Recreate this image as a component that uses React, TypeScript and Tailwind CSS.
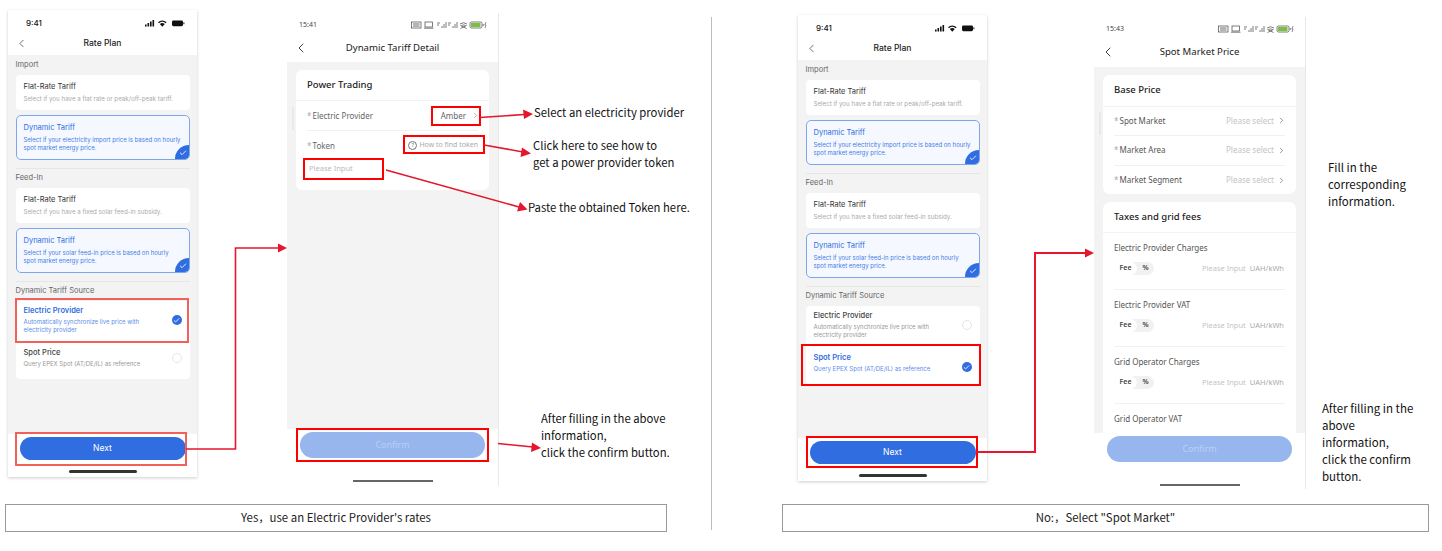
import React from 'react';
import { ChevronLeft, ChevronRight, Check } from 'lucide-react';

const CJK = "font-['Noto_Sans_CJK_SC','Noto_Sans',sans-serif]";

const IosStatus = () => (
  <svg width="40" height="9" viewBox="0 0 40 9" className="text-[#111]" fill="currentColor">
    <rect x="0" y="5.5" width="1.6" height="2" />
    <rect x="2.5" y="4" width="1.6" height="3.5" />
    <rect x="5" y="2.5" width="1.6" height="5" />
    <rect x="7.5" y="1" width="1.6" height="6.5" />
    <path d="M13 3.2a6.4 6.4 0 0 1 8.6 0l-1 1.1a5 5 0 0 0-6.6 0zM14.8 5.1a3.8 3.8 0 0 1 5 0l-2.5 2.7z" />
    <rect x="27" y="1.4" width="11" height="5.8" rx="1.4" />
    <rect x="38.4" y="3.3" width="1" height="2" rx="0.4" />
  </svg>
);

const AndroidStatus = () => (
  <svg width="76" height="10" viewBox="0 0 76 10" fill="none" stroke="#444" strokeWidth="0.7">
    <rect x="0.5" y="2" width="9.5" height="6" />
    <path d="M2 4h6.5M2 6h6.5" strokeWidth="0.8" />
    <rect x="14" y="2" width="7.5" height="5" />
    <path d="M13 8.2h9.5" />
    <path d="M26 3h3M26 5h2M31 8V6M33 8V4M35 8V2" />
    <path d="M37 3h3M37 5h2M42 8V6M44 8V4M46 8V2" />
    <path d="M49 4a6 6 0 0 1 7 0M50.500 5.500a4 4 0 0 1 4 0M49.500 8.500l6-3M55.500 8.500l-6-3" />
    <rect x="59" y="2" width="12" height="6" rx="1.500" />
    <rect x="60" y="3" width="9.500" height="4" fill="#7ac143" stroke="none" />
    <path d="M72.200 4v2" />
    <path d="M75 2l-1.200 3h1.200l-1 3" strokeWidth="0.6" />
  </svg>
);

const Corner = () => (
  <div className="absolute right-0 bottom-0 w-[14px] h-[14px] bg-[#2f6de0] rounded-tl-[14px] rounded-br-[4px] flex items-end justify-end pr-[2px] pb-[2px]">
    <Check size={8} color="#fff" strokeWidth={2.6} />
  </div>
);

const TariffCard = ({ title, lines, active }: { title: string; lines: string[]; active?: boolean }) => (
  <div
    className={
      active
        ? 'relative h-[44.5px] rounded-[5px] border border-[#7ea6ee] bg-[#f5f9ff] px-[7px] pt-[7px] overflow-hidden'
        : 'relative h-[35.5px] rounded-[4px] bg-white px-[8px] pt-[7.5px]'
    }
  >
    <div className={active ? 'text-[7.5px] leading-[10px] text-[#2f6de0]' : 'text-[7.5px] leading-[10px] text-[#333]'}>{title}</div>
    <div className={active ? 'mt-[3px] text-[6px] leading-[8.2px] text-[#3f7be6]' : 'mt-[3px] text-[6.2px] leading-[8.2px] text-[#aaa]'}>
      {lines.map(l => (
        <div key={l} className="whitespace-nowrap">{l}</div>
      ))}
    </div>
    {active && <Corner />}
  </div>
);

const Radio = ({ on }: { on: boolean }) =>
  on ? (
    <div className="w-[10px] h-[10px] rounded-full bg-[#2f6de0] flex items-center justify-center shrink-0">
      <Check size={7} color="#fff" strokeWidth={3} />
    </div>
  ) : (
    <div className="w-[10px] h-[10px] rounded-full border border-[#e5e5e5] bg-white shrink-0" />
  );

const SourceRow = ({ title, lines, on, tall }: { title: string; lines: string[]; on: boolean; tall: boolean }) => (
  <div className={tall ? 'h-[42px] px-[8px] pt-[5.5px] flex items-start justify-between' : 'h-[36.5px] px-[8px] pt-[5.5px] flex items-start justify-between'}>
    <div>
      <div className={on ? 'text-[7.5px] leading-[10px] font-semibold text-[#2f6de0]' : 'text-[7.5px] leading-[10px] font-medium text-[#444]'}>{title}</div>
      <div className={on ? 'mt-[2px] text-[6px] leading-[8.2px] text-[#5b8ee8]' : 'mt-[2px] text-[6px] leading-[8.2px] text-[#999]'}>
        {lines.map(l => (
          <div key={l} className="whitespace-nowrap">{l}</div>
        ))}
      </div>
    </div>
    <div className={tall || on ? 'pt-[9px]' : 'pt-[5px]'}>
      <Radio on={on} />
    </div>
  </div>
);

const SectionLabel = ({ children, className }: { children: React.ReactNode; className: string }) => (
  <div className={`flex items-center text-[7.5px] text-[#666] ${className}`}>{children}</div>
);

const RatePlanPhone = ({ spot, className }: { spot?: boolean; className: string }) => (
  <div className={`bg-white w-[189px] flex flex-col shadow-[0_1px_3px_rgba(0,0,0,0.2)] shrink-0 font-['Inter',sans-serif] ${className}`}>
    <div className="h-[26px] pl-[18px] pr-[12px] flex items-center justify-between">
      <span className="text-[8px] font-medium text-[#111]">9:41</span>
      <IosStatus />
    </div>
    <div className="relative h-[19px] pb-[4px] flex items-center justify-center">
      <ChevronLeft size={13} strokeWidth={1.3} color="#333" className="absolute left-[7px] top-[1px]" />
      <span className="text-[8.5px] font-medium text-[#222]">Rate Plan</span>
    </div>
    <div className="flex-1 min-h-0 bg-[#f3f3f3] px-[7.5px]">
      <SectionLabel className="h-[19.5px]">Import</SectionLabel>
      <TariffCard title="Flat-Rate Tariff" lines={['Select if you have a flat rate or peak/off-peak tariff.']} />
      <div className="h-[5px]" />
      <TariffCard active title="Dynamic Tariff" lines={['Select if your electricity import price is based on hourly', 'spot market energy price.']} />
      <div className="mt-[8px] h-px bg-[#e6e6e6]" />
      <SectionLabel className="h-[19px]">Feed-In</SectionLabel>
      <TariffCard title="Flat-Rate Tariff" lines={['Select if you have a fixed solar feed-in subsidy.']} />
      <div className="h-[5px]" />
      <TariffCard active title="Dynamic Tariff" lines={['Select if your solar feed-in price is based on hourly', 'spot market energy price.']} />
      <div className="mt-[8px] h-px bg-[#e6e6e6]" />
      <SectionLabel className="h-[19px]">Dynamic Tariff Source</SectionLabel>
      <div className="bg-white rounded-[4px]">
        <SourceRow tall on={!spot} title="Electric Provider" lines={['Automatically synchronize live price with', 'electricity provider']} />
        <SourceRow tall={false} on={!!spot} title="Spot Price" lines={['Query EPEX Spot (AT/DE/IL) as reference']} />
      </div>
    </div>
    <div className="h-[43px] pt-[3px] flex flex-col items-center">
      <div className="w-[166px] h-[23px] rounded-full bg-[#2f6de0] flex items-center justify-center text-[8.5px] text-white">Next</div>
      <div className="mt-[10px] w-[68px] h-[3px] rounded-full bg-[#333]" />
    </div>
  </div>
);

const DetailPhone = ({ time, title, navClass, bodyClass, className, children }: {
  time: string; title: string; navClass: string; bodyClass: string; className: string; children: React.ReactNode;
}) => (
  <div className={`bg-white w-[212px] flex flex-col border-r border-[#e8e8e8] shrink-0 font-['Noto_Sans',sans-serif] ${className}`}>
    <div className="h-[24px] pl-[12px] pr-[11px] flex items-center justify-between">
      <span className="text-[7px] text-[#444]">{time}</span>
      <AndroidStatus />
    </div>
    <div className={`relative pb-[3px] flex items-center justify-center ${navClass}`}>
      <ChevronLeft size={16} strokeWidth={1.4} color="#333" className="absolute left-[6px] top-[3px]" />
      <span className="text-[9.6px] text-[#222]">{title}</span>
    </div>
    <div className={`relative bg-[#f3f3f3] px-[9px] pt-[8px] overflow-hidden ${bodyClass}`}>
      <div className="absolute left-[5px] top-[45px] w-[2px] h-[23px] bg-[#e9e9e9]" />
      {children}
    </div>
    <div className="flex-1 pt-[3px] flex flex-col items-center">
      <div className="w-[185px] h-[26px] rounded-full bg-[#97b6ee] flex items-center justify-center text-[9px] text-[#b9cff5]">Confirm</div>
      <div className="mt-[22px] w-[80px] h-[2px] bg-[#666]" />
    </div>
  </div>
);

const Star = () => <span className="inline-block w-[5.5px] text-[#aaa]">*</span>;

const SelectRow = ({ label, last }: { label: string; last?: boolean }) => (
  <div className={last ? 'mx-[11px] h-[29px] flex items-center justify-between text-[8px]' : 'mx-[11px] h-[29.500px] border-b border-[#f1f1f1] flex items-center justify-between text-[8px]'}>
    <span className="text-[#555]"><Star />{label}</span>
    <span className="flex items-center gap-[3px] -mr-[1px] text-[#c4c4c4]">Please select<ChevronRight size={9} color="#555" strokeWidth={1.6} /></span>
  </div>
);

const FeeRow = ({ label }: { label: string }) => (
  <div className="mx-[11px] h-[57px] border-b border-[#f1f1f1]">
    <div className="h-[29px] flex items-center text-[8px] text-[#555]">{label}</div>
    <div className="flex items-center justify-between pr-[1px]">
      <div className="w-[40px] h-[12.500px] rounded-full bg-[#f1f1f1] flex items-center text-[7px] font-semibold text-[#444]">
        <span className="w-[23px] h-full rounded-full bg-white flex items-center justify-center">Fee</span>
        <span className="flex-1 text-center">%</span>
      </div>
      <div className="flex items-center gap-[4px] text-[7.500px]">
        <span className="text-[#c4c4c4]">Please Input</span>
        <span className="text-[#aaa]">UAH/kWh</span>
      </div>
    </div>
  </div>
);

const Caption = ({ children, className }: { children: React.ReactNode; className: string }) => (
  <div className={`h-[28px] border border-[#999] flex items-center justify-center text-[11.400px] text-[#222] ${CJK} ${className}`}>{children}</div>
);

const Note = ({ lines, className }: { lines: string[]; className: string }) => (
  <div className={`absolute leading-[17px] text-[#111] whitespace-nowrap ${CJK} ${className}`}>
    {lines.map(l => (
      <div key={l}>{l}</div>
    ))}
  </div>
);

const Mark = ({ className }: { className: string }) => <div className={`absolute border-2 border-[#f00] ${className}`} />;

const Arrow = ({ d, tip, w = 1.6 }: { d: string; tip: string; w?: number }) => (
  <>
    <path d={d} fill="none" stroke="#e5162d" strokeWidth={w} />
    <polygon points={tip} fill="#e5162d" />
  </>
);

const Annotations = () => (
  <>
    <div className="absolute left-[15px] top-[298px] w-[174px] h-[44.500px] border-2 border-[#f2605c]" />
    <div className="absolute left-[15px] top-[431.500px] w-[172px] h-[34px] border-2 border-[#f2605c]" />
    <Mark className="left-[431px] top-[106px] w-[50px] h-[20px]" />
    <Mark className="left-[403px] top-[135px] w-[82px] h-[19px]" />
    <Mark className="left-[303px] top-[158px] w-[81px] h-[22px]" />
    <Mark className="left-[296px] top-[428px] w-[193px] h-[34px]" />
    <Mark className="left-[801px] top-[344px] w-[180px] h-[42px]" />
    <Mark className="left-[806px] top-[436px] w-[172px] h-[32px]" />
    <svg className="absolute left-0 top-0 pointer-events-none" width="1442" height="551">
      <Arrow d="M480 117.500L524 114.500" tip="533,114 523,109.500 524,119" />
      <Arrow d="M484 145L523 152" tip="531,153.500 522,147.500 520.500,157" />
      <Arrow d="M386 170L519 207" tip="527.500,209.500 520,202 517,211.500" />
      <Arrow d="M186 449H235.500V248H279" tip="287,248 278,243.500 278,252.500" />
      <Arrow d="M498 443.500L533 447" tip="541,448 532,442.500 531,452" />
      <Arrow w={2} d="M976 452H1035V253H1086" tip="1094,253 1085,248.500 1085,257.500" />
    </svg>
    <Note className="left-[534px] top-[104px] text-[11.300px]" lines={['Select an electricity provider']} />
    <Note className="left-[533px] top-[137px] text-[11.300px]" lines={['Click here to see how to', 'get a power provider token']} />
    <Note className="left-[528px] top-[199px] text-[11.300px]" lines={['Paste the obtained Token here.']} />
    <Note className="left-[541px] top-[410px] text-[11.300px]" lines={['After filling in the above', 'information,', 'click the confirm button.']} />
    <Note className="left-[1328px] top-[159px] text-[11.500px]" lines={['Fill in the', 'corresponding', 'information.']} />
    <Note className="left-[1322px] top-[400px] text-[11.500px] leading-[17.200px]" lines={['After filling in the', 'above', 'information,', 'click the confirm', 'button.']} />
  </>
);

export default function App() {
  return (
    <div className="relative w-[1442px] h-[551px] bg-white overflow-hidden flex">
      <div className="w-[711px] shrink-0 flex flex-col">
        <div className="h-[504px] flex items-start">
          <RatePlanPhone className="ml-[8px] mt-[10px] h-[467px]" />
          <DetailPhone
            className="ml-[90px] mt-[13px] h-[473px]"
            time="15:41"
            title="Dynamic Tariff Detail"
            navClass="h-[25px]"
            bodyClass="h-[367px]"
          >
            <div className="bg-white rounded-[6px] w-[193px] h-[120px]">
              <div className="h-[31px] px-[11px] border-b border-[#f3f3f3] flex items-center text-[9.500px] font-medium text-[#222]">Power Trading</div>
              <div className="mx-[11px] h-[30px] border-b border-[#f1f1f1] flex items-center justify-between text-[8px] text-[#666]">
                <span><Star />Electric Provider</span>
                <span className="flex items-center gap-[5px] -mr-[2px]">Amber<ChevronRight size={9} color="#666" strokeWidth={1.3} /></span>
              </div>
              <div className="mx-[11px] h-[29px] flex items-center justify-between text-[8px] text-[#666]">
                <span><Star />Token</span>
                <span className="flex items-center gap-[2px] text-[7px] text-[#aaa]">
                  <span className="w-[9px] h-[9px] rounded-full border border-[#777] flex items-center justify-center text-[6px] text-[#777]">?</span>
                  How to find token
                </span>
              </div>
              <div className="pl-[13px] pt-[3px] text-[7.500px] text-[#bbb]">Please Input</div>
            </div>
          </DetailPhone>
        </div>
        <Caption className="ml-[5px] w-[662px]">Yes，use an Electric Provider's rates</Caption>
      </div>
      <div className="mt-[17px] h-[513px] w-px bg-[#bdbdbd] shrink-0" />
      <div className="flex-1 flex flex-col">
        <div className="h-[504px] flex items-start">
          <RatePlanPhone spot className="ml-[86px] mt-[15px] h-[466px]" />
          <DetailPhone
            className="ml-[107px] mt-[17px] h-[472px]"
            time="15:43"
            title="Spot Market Price"
            navClass="h-[26px]"
            bodyClass="h-[366px]"
          >
            <div className="bg-white rounded-[7px] w-[193px] h-[119px] overflow-hidden">
              <div className="h-[31.500px] px-[11px] border-b border-[#f3f3f3] flex items-center text-[9.500px] font-medium text-[#222]">Base Price</div>
              <SelectRow label="Spot Market" />
              <SelectRow label="Market Area" />
              <SelectRow label="Market Segment" last />
            </div>
            <div className="mt-[8px] bg-white rounded-t-[7px] w-[193px] h-[240px]">
              <div className="h-[31px] px-[11px] border-b border-[#f3f3f3] flex items-center text-[9.500px] font-medium text-[#222]">Taxes and grid fees</div>
              <FeeRow label="Electric Provider Charges" />
              <FeeRow label="Electric Provider VAT" />
              <FeeRow label="Grid Operator Charges" />
              <div className="mx-[11px] h-[29px] flex items-center text-[8px] text-[#555]">Grid Operator VAT</div>
            </div>
          </DetailPhone>
        </div>
        <Caption className="ml-[70px] w-[647px]">No:，Select "Spot Market"</Caption>
      </div>
      <Annotations />
    </div>
  );
}
